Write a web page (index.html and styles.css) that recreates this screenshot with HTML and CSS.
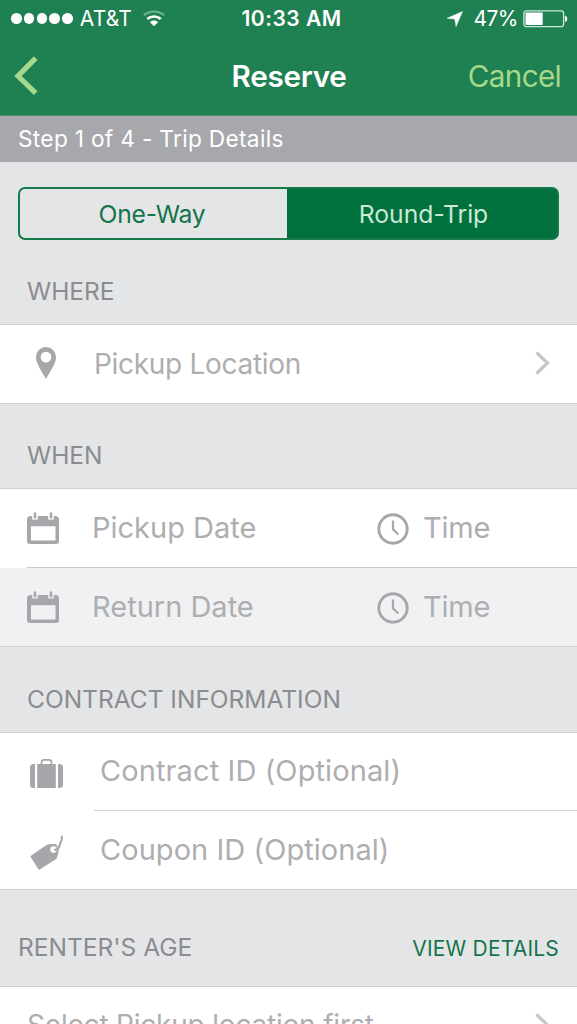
FILE: index.html
```html
<!DOCTYPE html>
<html lang="en">
<head>
<meta charset="utf-8">
<title>Reserve</title>
<link rel="stylesheet" href="styles.css">
</head>
<body>
<main class="screen">
  <header class="top">
    <div class="status">
      <div class="status-left">
        <div class="signal"><i class="dot"></i><i class="dot"></i><i class="dot"></i><i class="dot"></i><i class="dot"></i></div>
        <span class="carrier">AT&amp;T</span>
        <svg class="wifi" width="22" height="17" viewBox="0 0 22 17" fill="none">
          <path d="M.9 5.3C6.500 .2 15.500 .2 21.100 5.300" stroke="#6fb592" stroke-width="2.200"/>
          <path d="M4.300 9.100C8 5.600 14 5.600 17.700 9.100" stroke="#fff" stroke-width="2.700"/>
          <path d="M7.200 12.200C9.200 10.200 12.800 10.200 14.800 12.200L11 16Z" fill="#fff" stroke="#fff" stroke-width=".5"/>
        </svg>
      </div>
      <span class="clock">10:33 AM</span>
      <div class="status-right">
        <svg class="arrow" width="16" height="16" viewBox="0 0 17 16"><path d="M16.500 0L9.600 16L8.300 8.100L0 7.300Z" fill="#fff" stroke="#fff" stroke-width=".5"/></svg>
        <span class="percent">47%</span>
        <svg class="battery" width="45" height="18" viewBox="0 0 45 18">
          <rect x=".9" y=".9" width="39.700" height="15.800" rx="2.500" fill="none" stroke="#cfe6da" stroke-width="1.300"/>
          <rect x="2.500" y="2.500" width="17.200" height="12.600" rx=".8" fill="#fff"/>
          <path d="M42 5.500Q44.300 6.200 44.300 8.800T42 12.100Z" fill="#fff"/>
        </svg>
      </div>
    </div>
    <nav class="nav">
      <svg class="back" width="24" height="40" viewBox="0 0 24 40" fill="none"><path d="M21.700 2.200L4 20L21.700 37.200" stroke="#a5d98c" stroke-width="5.200"/></svg>
      <h1 class="title">Reserve</h1>
      <span class="cancel">Cancel</span>
    </nav>
  </header>
  <div class="step"><span class="step-text">Step 1 of 4 - Trip Details</span></div>
  <div class="switch">
    <div class="option"><span class="one-way">One-Way</span></div>
    <div class="option selected"><span class="round-trip">Round-Trip</span></div>
  </div>
  <h2 class="heading where"><span>WHERE</span></h2>
  <section class="group">
    <div class="row">
      <svg class="pin" width="20" height="32" viewBox="0 0 20 32"><path fill-rule="evenodd" d="M10 0A10 10 0 0 0 0 10.200C0 15.500 4 21.500 10 32C16 21.500 20 15.500 20 10.200A10 10 0 0 0 10 0ZM10 4.700A5.400 5.400 0 1 1 10 15.500A5.400 5.400 0 1 1 10 4.700Z" fill="#a6a7aa"/></svg>
      <span class="field pickup">Pickup Location</span>
      <svg class="chevron" width="16" height="24" viewBox="0 0 16 24" fill="none"><path d="M1.500 1.500L12.500 12L1.500 22.500" stroke="#c5c6c9" stroke-width="3.200"/></svg>
    </div>
  </section>
  <h2 class="heading when"><span>WHEN</span></h2>
  <section class="group">
    <div class="row dates">
      <svg class="calendar" width="32" height="33" viewBox="0 0 32 33"><use href="#calendar"/></svg>
      <span class="field date">Pickup Date</span>
      <svg class="time-icon" width="32" height="32" viewBox="0 0 32 32"><use href="#clock"/></svg>
      <span class="field time">Time</span>
    </div>
    <div class="row dates return">
      <svg class="calendar" width="32" height="33" viewBox="0 0 32 33"><use href="#calendar"/></svg>
      <span class="field date">Return Date</span>
      <svg class="time-icon" width="32" height="32" viewBox="0 0 32 32"><use href="#clock"/></svg>
      <span class="field time">Time</span>
    </div>
  </section>
  <h2 class="heading contract"><span>CONTRACT INFORMATION</span></h2>
  <section class="group">
    <div class="row ids first">
      <svg class="case" width="33" height="30" viewBox="0 0 33 30" fill="#a6a7aa">
        <path d="M5 5V29H3.500A3.500 3.500 0 0 1 0 25.500V8.500A3.500 3.500 0 0 1 3.500 5ZM28 5V29H29.500A3.500 3.500 0 0 0 33 25.500V8.500A3.500 3.500 0 0 0 29.500 5Z"/>
        <path d="M7.200 5H25.800V29H7.200Z"/>
        <path d="M11.500 5V3.500Q11.500 .8 14.200 .8H18.800Q21.500 .8 21.500 3.500V5" fill="none" stroke="#a6a7aa" stroke-width="1.700"/>
      </svg>
      <span class="field contract-id">Contract ID (Optional)</span>
    </div>
    <div class="row ids">
      <svg class="tag" width="34" height="35" viewBox="0 0 34 35">
        <path d="M.8 22.200Q0 21.500 1 20.700L16.500 10Q17.500 9.300 18.700 9.200L25 9Q26.500 9 27.200 10.500L28.500 15.500Q28.800 17 28.300 18.500L26.700 23Q26.300 24 25.500 24.500L10 34.300Q9 34.900 8.300 34Z" fill="#a6a7aa"/>
        <circle cx="23.600" cy="14.600" r="3.300" fill="#fff"/>
        <path d="M24.300 14.900C27.500 15 29.200 12.500 29.600 10.500C30 7 33 6.200 31.700 .8" fill="none" stroke="#a6a7aa" stroke-width="2.100"/>
      </svg>
      <span class="field coupon-id">Coupon ID (Optional)</span>
    </div>
  </section>
  <div class="heading age"><span class="age-text">RENTER'S AGE</span><span class="details">VIEW DETAILS</span></div>
  <section class="group">
    <div class="row select">
      <span class="field select-text">Select Pickup location first</span>
      <svg class="chevron" width="16" height="24" viewBox="0 0 16 24" fill="none"><path d="M1.500 1.500L12.500 12L1.500 22.500" stroke="#c5c6c9" stroke-width="3.200"/></svg>
    </div>
  </section>
</main>
<svg class="symbols" width="0" height="0">
  <symbol id="calendar" viewBox="0 0 32 33">
    <path fill-rule="evenodd" d="M3.500 4H5.200V7.500H10.800V4H21.200V7.500H26.800V4H28.500Q32 4 32 7.500V29Q32 32 29 32H3Q0 32 0 29V7.500Q0 4 3.500 4ZM4 14.300V28.500H28.500V14.300Z" fill="#a6a7aa"/>
    <path d="M8 .5V6.300M24 .5V6.300" stroke="#a6a7aa" stroke-width="2.600"/>
  </symbol>
  <symbol id="clock" viewBox="0 0 32 32">
    <circle cx="16" cy="16" r="14.200" fill="none" stroke="#a6a7aa" stroke-width="2.900"/>
    <path d="M16 7.500V16.300L21.300 21.500" fill="none" stroke="#a6a7aa" stroke-width="2.200"/>
  </symbol>
</svg>
</body>
</html>
```
FILE: styles.css
```css
* { box-sizing: border-box; }
body {
  margin: 0;
  height: 1024px;
  overflow: hidden;
  background: #e4e5e7;
  font-family: Inter, "Liberation Sans", sans-serif;
}
.screen { width: 577px; height: 1024px; overflow: hidden; }
.screen svg { display: block; flex: none; }
.screen span, .title { white-space: nowrap; }
.symbols { display: none; }

.top { height: 116px; background: #1f8052; color: #fff; border-bottom: 1px solid #548c74; }
.status {
  display: grid;
  grid-template-columns: 1fr auto 1fr;
  align-items: center;
  height: 37px;
  padding: 0 9px 0 11px;
  font-size: 21px;
}
.status-left, .status-right { display: flex; align-items: center; }
.status-right { justify-content: flex-end; }
.signal { display: flex; gap: 2.100px; }
.dot { width: 10.700px; height: 10.700px; border-radius: 50%; background: #fff; }
.carrier { margin-left: 7px; letter-spacing: 0.200px; }
.wifi { margin-left: 11px; }
.clock { padding-left: 4px; font-weight: 600; letter-spacing: 0.500px; }
.arrow { margin-right: 10px; }
.percent { letter-spacing: -0.500px; }
.battery { margin-left: 5px; }
.nav {
  display: grid;
  grid-template-columns: 1fr auto 1fr;
  align-items: center;
  height: 78px;
  padding: 0 16px 0 13px;
}
.title { margin: 0; padding-left: 4px; font-size: 29.700px; font-weight: 600; letter-spacing: -0.300px; }
.cancel { justify-self: end; font-size: 29.700px; font-weight: 400; color: #a5d98c; letter-spacing: -0.700px; }
.back { margin-left: 1px; }

.step {
  display: flex;
  align-items: center;
  height: 46px;
  padding: 0 0 1px 18px;
  background: #a7a8ab;
  color: #fff;
  font-size: 22.700px;
  letter-spacing: 0.300px;
}
.switch {
  display: flex;
  height: 53px;
  margin: 25px 18px 0;
  border: 2px solid #157a49;
  border-radius: 7px;
  overflow: hidden;
  background: #00713c;
  color: #14744a;
  font-size: 24.700px;
}
.option { display: flex; align-items: center; justify-content: center; width: 267px; background: #e4e5e7; }
.one-way { margin-right: 3px; letter-spacing: -0.200px; }
.round-trip { margin-left: 3px; }
.selected { width: 270px; background: #00713c; color: #c9e8d6; }

.heading {
  display: flex;
  align-items: center;
  margin: 0;
  padding-left: 27px;
  color: #8b8c90;
  font-size: 24.500px;
  font-weight: 400;
}
.where { height: 84px; padding-top: 17px; }
.when { height: 84px; padding-top: 18px; }
.contract { height: 85px; padding-top: 18px; }
.age { justify-content: space-between; height: 96px; padding: 18px 18px 0; }
.details { margin-top: 2px; color: #15744a; font-size: 21px; letter-spacing: 0.200px; }

.group { border-top: 1px solid #cdced0; border-bottom: 1px solid #cdced0; background: #fff; }
.row { display: flex; align-items: center; height: 78px; }
.field { color: #aeaeb0; font-size: 28px; font-weight: 400; }
.pin { margin: -2px 0 0 36px; }
.pickup { margin: -1px 0 0 38px; letter-spacing: -0.300px; }
.chevron { margin: -2px 26px 0 auto; }
.dates { padding-left: 27px; }
.date { width: 285px; margin: -1px 0 0 33px; font-size: 29px; }
.time { margin: -1px 0 0 14px; font-size: 29px; letter-spacing: -0.200px; }
.time-icon { margin-top: 2px; }
.return {
  height: 79px;
  background:
    linear-gradient(#fff, #fff) left top / 27px 1px no-repeat,
    linear-gradient(#c8c9cb, #c8c9cb) left top / 100% 1px no-repeat,
    #f0f1f3;
}
.return .calendar { margin-top: 2px; }
.ids { padding-left: 30px; }
.first { background: linear-gradient(#d2d3d5, #d2d3d5) right bottom / 483px 1px no-repeat; }
.case { margin-top: 4px; }
.contract-id { margin: -3px 0 0 37px; font-size: 29px; letter-spacing: 0.100px; }
.tag { margin-top: 5px; }
.coupon-id { margin: -1px 0 0 36px; font-size: 29px; letter-spacing: 0.050px; }
.select { padding-left: 27px; }
.select-text { margin-top: -3px; letter-spacing: -0.200px; }
```
